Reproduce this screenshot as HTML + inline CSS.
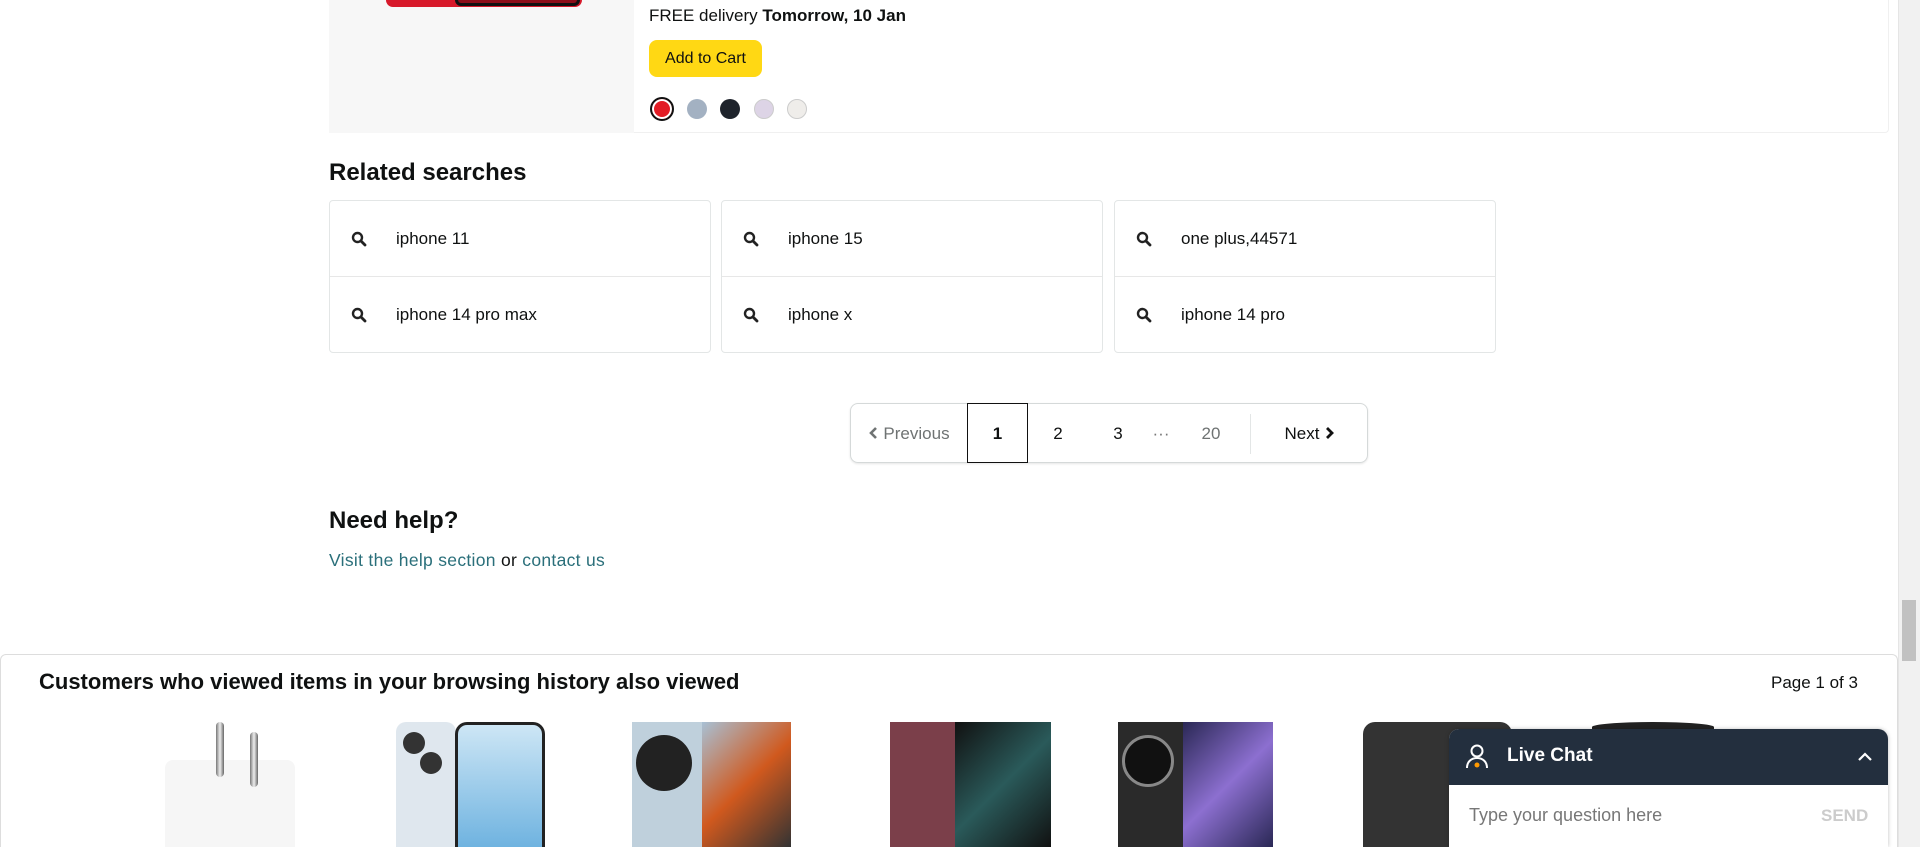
<!DOCTYPE html>
<html><head><meta charset="utf-8"><style>
*{box-sizing:border-box;margin:0;padding:0}
html,body{width:1920px;height:847px;overflow:hidden}
body{background:#fff;font-family:"Liberation Sans",sans-serif;color:#0f1111;position:relative}
.a{position:absolute}
.card{border:1px solid #e3e6e6;border-radius:4px}
.sr{position:absolute;left:0;right:0;height:76px;display:flex;align-items:center;font-size:17px}
.sr svg{margin-left:21px;margin-right:29px}
.pg{position:absolute;top:0;height:60px;line-height:60px;font-size:17px;text-align:center}
</style></head><body>
<div class="a" style="left:329px;top:0;width:1560px;height:133px;border:1px solid #f0f0f0;border-top:none;border-radius:0 0 4px 4px"></div>
<div class="a" style="left:329px;top:0;width:305px;height:133px;background:#f7f7f7"></div>
<div class="a" style="left:386px;top:0;width:196px;height:7px;background:#d7192a;border-radius:0 0 12px 12px"></div>
<div class="a" style="left:455px;top:0;width:125px;height:6px;background:#8c0f1a;border:3px solid #111;border-top:none;border-radius:0 0 10px 10px"></div>
<div class="a" style="left:649px;top:6px;font-size:17px">FREE delivery <b>Tomorrow, 10 Jan</b></div>
<div class="a" style="left:649px;top:40px;width:113px;height:37px;background:#ffd814;border-radius:8px;font-size:16px;line-height:37px;text-align:center">Add to Cart</div>
<div class="a" style="left:650px;top:97px;width:24px;height:24px;border-radius:50%;border:2px solid #111;background:#e31c25;box-shadow:inset 0 0 0 2px #fff"></div>
<div class="a" style="left:687px;top:99px;width:20px;height:20px;border-radius:50%;background:#a3b1c2"></div>
<div class="a" style="left:720px;top:99px;width:20px;height:20px;border-radius:50%;background:#1e232b"></div>
<div class="a" style="left:754px;top:99px;width:20px;height:20px;border-radius:50%;background:#ddd4e6;border:1px solid #ccc"></div>
<div class="a" style="left:787px;top:99px;width:20px;height:20px;border-radius:50%;background:#efedea;border:1px solid #ccc"></div>

<div class="a" style="left:329px;top:159px;font-size:24px;font-weight:bold">Related searches</div>
<div class="a card" style="left:329px;top:200px;width:382px;height:153px">
 <div class="sr" style="top:0;border-bottom:1px solid #e7e7e7"><svg width="16" height="16" viewBox="0 0 16 16"><circle cx="6.5" cy="6.5" r="4.5" fill="none" stroke="#222" stroke-width="2.4"/><path d="M10 10l4 4" stroke="#222" stroke-width="2.8" stroke-linecap="round"/></svg>iphone 11</div>
 <div class="sr" style="top:76px"><svg width="16" height="16" viewBox="0 0 16 16"><circle cx="6.5" cy="6.5" r="4.5" fill="none" stroke="#222" stroke-width="2.4"/><path d="M10 10l4 4" stroke="#222" stroke-width="2.8" stroke-linecap="round"/></svg>iphone 14 pro max</div>
</div>
<div class="a card" style="left:721px;top:200px;width:382px;height:153px">
 <div class="sr" style="top:0;border-bottom:1px solid #e7e7e7"><svg width="16" height="16" viewBox="0 0 16 16"><circle cx="6.5" cy="6.5" r="4.5" fill="none" stroke="#222" stroke-width="2.4"/><path d="M10 10l4 4" stroke="#222" stroke-width="2.8" stroke-linecap="round"/></svg>iphone 15</div>
 <div class="sr" style="top:76px"><svg width="16" height="16" viewBox="0 0 16 16"><circle cx="6.5" cy="6.5" r="4.5" fill="none" stroke="#222" stroke-width="2.4"/><path d="M10 10l4 4" stroke="#222" stroke-width="2.8" stroke-linecap="round"/></svg>iphone x</div>
</div>
<div class="a card" style="left:1114px;top:200px;width:382px;height:153px">
 <div class="sr" style="top:0;border-bottom:1px solid #e7e7e7"><svg width="16" height="16" viewBox="0 0 16 16"><circle cx="6.5" cy="6.5" r="4.5" fill="none" stroke="#222" stroke-width="2.4"/><path d="M10 10l4 4" stroke="#222" stroke-width="2.8" stroke-linecap="round"/></svg>one plus,44571</div>
 <div class="sr" style="top:76px"><svg width="16" height="16" viewBox="0 0 16 16"><circle cx="6.5" cy="6.5" r="4.5" fill="none" stroke="#222" stroke-width="2.4"/><path d="M10 10l4 4" stroke="#222" stroke-width="2.8" stroke-linecap="round"/></svg>iphone 14 pro</div>
</div>

<div class="a" style="left:850px;top:403px;width:518px;height:60px;border:1px solid #d5d9d9;border-radius:8px;box-shadow:0 1px 2px rgba(0,0,0,.1)">
 <div class="pg" style="left:0;width:116px;color:#6f7373"><svg width="10" height="14" viewBox="0 0 10 14" style="vertical-align:-1px;margin-right:5px"><path d="M8 2L3 7l5 5" fill="none" stroke="#6f7373" stroke-width="2.6"/></svg>Previous</div>
 <div class="pg" style="left:116px;top:-1px;width:61px;height:60px;border:1px solid #111;font-weight:bold">1</div>
 <div class="pg" style="left:177px;width:60px">2</div>
 <div class="pg" style="left:237px;width:60px">3</div>
 <div class="pg" style="left:285px;width:50px;color:#777">···</div>
 <div class="pg" style="left:330px;width:60px;color:#6f7373">20</div>
 <div class="a" style="left:399px;top:10px;width:1px;height:40px;background:#e3e6e6"></div>
 <div class="pg" style="left:400px;width:118px">Next<svg width="10" height="14" viewBox="0 0 10 14" style="vertical-align:-1px;margin-left:6px"><path d="M2 2l5 5-5 5" fill="none" stroke="#111" stroke-width="2.8"/></svg></div>
</div>

<div class="a" style="left:329px;top:507px;font-size:24px;font-weight:bold">Need help?</div>
<div class="a" style="left:329px;top:550px;font-size:17.5px;color:#2a6f7a;letter-spacing:0.3px">Visit the help section <span style="color:#0f1111">or</span> contact us</div>

<div class="a" style="left:0;top:654px;width:1898px;height:193px;border:1px solid #dddddd;border-bottom:none;border-radius:6px 6px 0 0"></div>
<div class="a" style="left:39px;top:669px;font-size:22px;font-weight:bold">Customers who viewed items in your browsing history also viewed</div>
<div class="a" style="left:1771px;top:673px;font-size:17px">Page 1 of 3</div>
<div class="a" style="left:165px;top:760px;width:130px;height:87px;background:#f6f6f6;border-radius:8px 8px 0 0"></div>
<div class="a" style="left:216px;top:722px;width:8px;height:55px;background:linear-gradient(90deg,#777,#eee,#666);border-radius:4px"></div>
<div class="a" style="left:250px;top:732px;width:8px;height:55px;background:linear-gradient(90deg,#777,#eee,#666);border-radius:4px"></div>
<div class="a" style="left:396px;top:722px;width:60px;height:125px;background:#dfe7ee;border-radius:10px 10px 0 0"></div>
<div class="a" style="left:455px;top:722px;width:90px;height:125px;background:linear-gradient(#cde6f5,#6fb3e0);border:3px solid #222;border-bottom:none;border-radius:12px 12px 0 0"></div>
<div class="a" style="left:403px;top:732px;width:22px;height:22px;background:#333;border-radius:50%"></div>
<div class="a" style="left:420px;top:752px;width:22px;height:22px;background:#333;border-radius:50%"></div>
<div class="a" style="left:632px;top:722px;width:70px;height:125px;background:#bfd0dc"></div>
<div class="a" style="left:702px;top:722px;width:89px;height:125px;background:linear-gradient(135deg,#a8c0d4,#d0591e,#333)"></div>
<div class="a" style="left:636px;top:735px;width:56px;height:56px;background:#222;border-radius:50%"></div>
<div class="a" style="left:890px;top:722px;width:65px;height:125px;background:#7b3f4a"></div>
<div class="a" style="left:955px;top:722px;width:96px;height:125px;background:linear-gradient(135deg,#111,#2a5a5a,#111)"></div>
<div class="a" style="left:1118px;top:722px;width:65px;height:125px;background:#2a2a2a"></div>
<div class="a" style="left:1183px;top:722px;width:90px;height:125px;background:linear-gradient(135deg,#2a2855,#8c6fd0,#2a2855)"></div>
<div class="a" style="left:1122px;top:735px;width:52px;height:52px;background:#111;border:3px solid #888;border-radius:50%"></div>
<div class="a" style="left:1363px;top:722px;width:149px;height:125px;background:#333;border-radius:12px 12px 0 0"></div>
<div class="a" style="left:1592px;top:722px;width:122px;height:10px;background:#222;border-radius:50% 50% 0 0"></div>

<div class="a" style="left:1449px;top:729px;width:439px;height:118px;background:#fff;border-radius:10px 10px 0 0;box-shadow:0 0 4px rgba(0,0,0,.25);overflow:hidden">
 <div style="height:56px;background:#232f3e;color:#fff;position:relative">
  <svg class="a" style="left:14px;top:14px" width="28" height="28" viewBox="0 0 28 28"><circle cx="14" cy="8" r="5.5" fill="none" stroke="#fff" stroke-width="2"/><path d="M4 25c0-6 4-10 10-10s10 4 10 10" fill="none" stroke="#fff" stroke-width="2"/><circle cx="14" cy="22" r="2.5" fill="#f90"/></svg>
  <div class="a" style="left:58px;top:16px;font-size:19px;font-weight:bold">Live Chat</div>
  <svg class="a" style="left:408px;top:21px" width="16" height="12" viewBox="0 0 16 12"><path d="M2 10l6-6 6 6" fill="none" stroke="#fff" stroke-width="2.2"/></svg>
 </div>
 <div class="a" style="left:20px;top:76px;font-size:18px;color:#777">Type your question here</div>
 <div class="a" style="left:372px;top:77px;font-size:17px;font-weight:bold;color:#ccc">SEND</div>
</div>
<div class="a" style="left:1898px;top:0;width:22px;height:847px;background:#f1f1f1;border-left:1px solid #e5e5e5"></div>
<div class="a" style="left:1902px;top:600px;width:14px;height:61px;background:#c1c1c1"></div>
</body></html>
